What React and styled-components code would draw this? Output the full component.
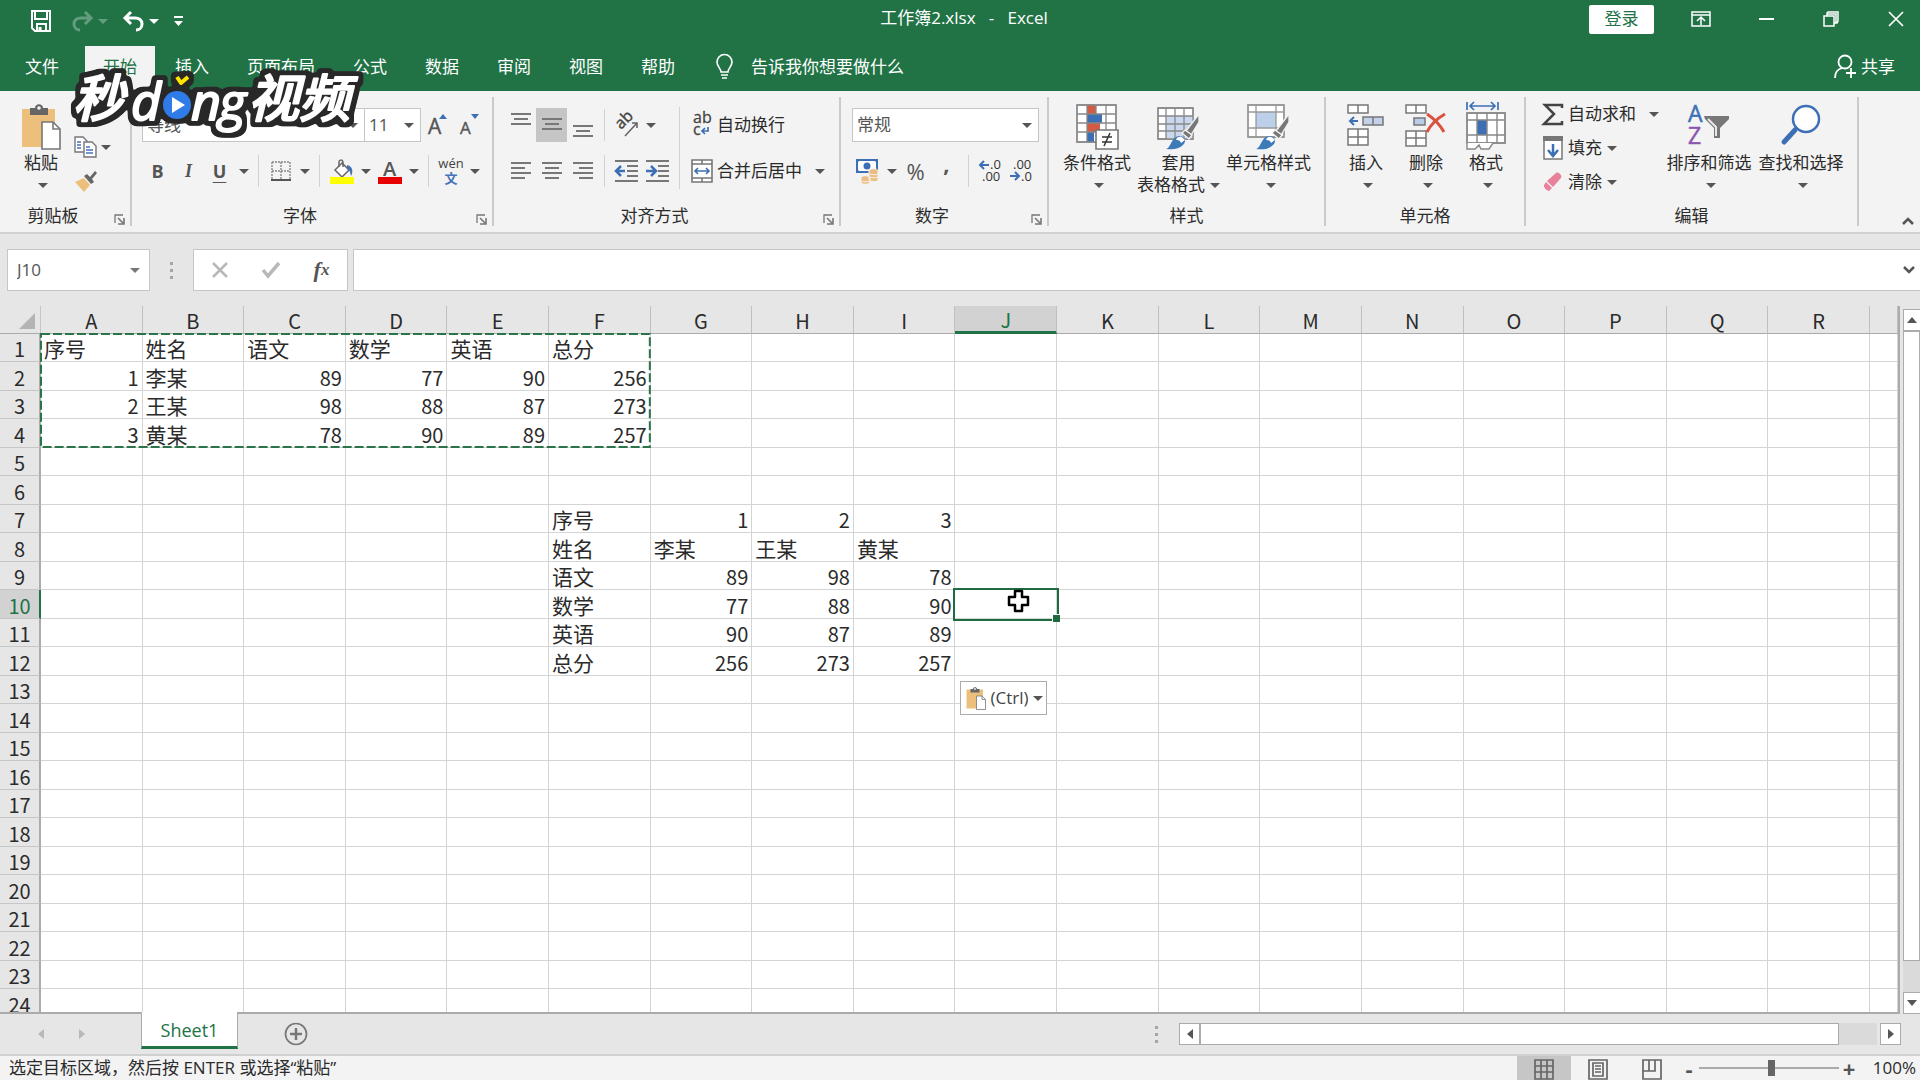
import styled, { createGlobalStyle, css } from "styled-components";

const GlobalStyle = createGlobalStyle`
    * {
        box-sizing: border-box;
    }
    body {
        margin: 0;
        overflow: hidden;
    }
    body, button, input, select {
        font-family: "Open Sans", "Noto Sans CJK SC", sans-serif;
        font-size: 17px;
        line-height: 22px;
        color: #2b2b2b;
    }
    button, input, select {
        margin: 0;
        padding: 0;
        border: 0;
        background: none;
    }
    svg {
        display: block;
        flex: none;
        overflow: visible;
    }
`;

const Window = styled.div`
    display: flex;
    flex-direction: column;
    height: 100vh;
    background-color: #e6e6e6;
`;

/* ---------- title bar ---------- */

const TitleBar = styled.header`
    display: grid;
    grid-template-columns: 1fr auto 1fr;
    height: 46px;
    padding-bottom: 8px;
    background-color: #217346;
    color: #fff;
`;

const QuickAccess = styled.div`
    display: flex;
    align-items: center;
    gap: 15px;
    padding: 4px 0 0 31px;
`;

const QuickButton = styled.button`
    display: flex;
    align-items: center;
    gap: 5px;
    min-width: 26px;
    height: 24px;
    color: #fff;
    opacity: ${(props) => (props.$dim ? 0.3 : 1)};
`;

const Title = styled.h1`
    margin: 0;
    padding-left: 8px;
    font-size: 17px;
    font-weight: 400;
    line-height: 36px;
    white-space: pre;
`;

const WindowButtons = styled.div`
    display: flex;
    align-items: center;
    justify-content: flex-end;
    gap: 17px;
`;

const LoginButton = styled.button`
    width: 65px;
    height: 29px;
    margin-right: 6px;
    border-radius: 2px;
    background-color: #fff;
    color: #217346;
`;

const WindowButton = styled.button`
    display: flex;
    align-items: center;
    justify-content: center;
    width: 48px;
    height: 36px;
    color: #fff;
`;

/* ---------- tabs ---------- */

const TabBar = styled.nav`
    display: flex;
    height: 45px;
    background-color: #217346;
`;

const Tab = styled.button`
    margin: 0 1px;
    padding: 0 ${(props) => (props.$file ? 24 : 18)}px 4px;
    color: #fff;
    ${(props) =>
        props.$active &&
        css`
            background-color: #f3f3f3;
            color: #217346;
        `}
`;

const TellMe = styled.button`
    display: flex;
    align-items: center;
    gap: 18px;
    margin-left: 22px;
    padding-bottom: 4px;
    color: #fff;
`;

const Share = styled(TellMe)`
    gap: 5px;
    margin-left: auto;
    margin-right: 25px;
`;

/* ---------- ribbon ---------- */

const Ribbon = styled.div`
    display: flex;
    padding: 6px 0;
    border-bottom: 2px solid #d0d0d0;
    background-color: #f3f3f3;
`;

const Group = styled.section`
    display: flex;
    flex-direction: column;
    flex: none;
    width: ${(props) => props.$width}px;
    height: 129px;
    border-right: 2px solid #cacaca;
`;

const GroupBody = styled.div`
    display: flex;
    flex: 1;
    padding: 0 ${(props) => props.$side ?? 10}px 0 ${(props) => props.$side ?? 11}px;
`;

const GroupFooter = styled.div`
    display: flex;
    align-items: center;
    height: 22px;
    padding-top: 2px;
`;

const GroupName = styled.span`
    flex: 1;
    text-align: center;
`;

const Launcher = styled.button`
    width: 24px;
    padding: 6px 5px 0 8px;
`;

const Rows = styled.div`
    display: flex;
    flex-direction: column;
    gap: 13px;
    flex: ${(props) => (props.$grow ? 1 : "none")};
    padding-top: 11px;
`;

const Row = styled.div`
    display: flex;
    align-items: center;
    height: ${(props) => (props.$small ? 32 : 34)}px;
`;

const Tool = styled.button`
    display: flex;
    align-items: center;
    justify-content: center;
    width: 31px;
    height: 34px;
    padding-bottom: ${(props) => (props.$raised ? 16 : 0)}px;
    color: #555;
    font-size: ${(props) => (props.$large ? 22 : 18)}px;
    background-color: ${(props) => (props.$on ? "#c5c5c5" : "transparent")};
    font-weight: ${(props) => (props.$bold ? 700 : 400)};
    font-style: ${(props) => (props.$italic ? "italic" : "normal")};
    font-family: ${(props) => (props.$italic ? '"Liberation Serif", serif' : "inherit")};
    text-decoration: ${(props) => (props.$underline ? "underline" : "none")};
    text-underline-offset: 4px;
`;

const Caret = styled.span`
    flex: none;
    border: 5px solid transparent;
    border-bottom-width: 0;
    border-top-color: ${(props) => props.$color || "#555"};
    pointer-events: none;
`;

const CaretButton = styled.button`
    display: flex;
    align-items: center;
    justify-content: center;
    width: 17px;
    height: 34px;
`;

const Divider = styled.span`
    width: 1px;
    height: ${(props) => (props.$tall ? 82 : 32)}px;
    margin: ${(props) => (props.$tall ? 10 : 0)}px 6px 0;
    background-color: #d2d2d2;
`;

const Combo = styled.label`
    display: flex;
    align-items: center;
    width: ${(props) => props.$width}px;
    height: 34px;
    padding: 0 6px 0 4px;
    border: 1px solid #c6c6c6;
    background-color: #fff;

    select {
        flex: 1;
        min-width: 0;
        height: 30px;
        color: #555;
        appearance: none;
        outline: none;
    }
    & + & {
        border-left: 0;
    }
`;

const LabelTool = styled.button`
    display: flex;
    align-items: center;
    height: 34px;
    white-space: nowrap;
`;

const LabelIcon = styled.span`
    display: flex;
    justify-content: center;
    width: 31px;
`;

const LabelCaret = styled(Caret)`
    margin-left: ${(props) => (props.$far ? 13 : 5)}px;
`;

const BigTool = styled.button`
    display: flex;
    flex-direction: column;
    align-items: center;
    flex: none;
    height: 104px;
    min-width: ${(props) => props.$width || 0}px;
    padding: 4px 3px 0;
    white-space: nowrap;
`;

const BigIcon = styled.span`
    display: flex;
    align-items: center;
    justify-content: center;
    height: 51px;
`;

const BigLine = styled.span`
    display: flex;
    align-items: center;
    justify-content: center;
    gap: 5px;
    height: 22px;
    padding-left: ${(props) => (props.$caretOnly ? 4 : 0)}px;
`;

const ClipTools = styled.div`
    display: flex;
    flex-direction: column;
    gap: 2px;
    padding: 34px 0 0 3px;
`;

const EditList = styled.div`
    display: flex;
    flex-direction: column;
    width: 128px;
`;

const Collapse = styled.button`
    align-self: flex-end;
    margin: 0 6px 0 auto;
`;

/* ---------- formula bar ---------- */

const FormulaBar = styled.div`
    display: flex;
    padding: 15px 0 15px 7px;
`;

const NameBox = styled.label`
    display: flex;
    align-items: center;
    width: 143px;
    height: 42px;
    padding: 0 9px;
    border: 1px solid #c6c6c6;
    background-color: #fff;

    input {
        flex: 1;
        min-width: 0;
        color: #555;
    }
`;

const Grip = styled.span`
    align-self: center;
    width: 3px;
    height: 17px;
    margin: 0 ${(props) => (props.$tight ? 21 : 20)}px;
    background: repeating-linear-gradient(#a5a5a5 0 3px, transparent 3px 7px);
`;

const FxBox = styled.div`
    display: flex;
    width: 155px;
    height: 42px;
    margin-right: 5px;
    border: 1px solid #c6c6c6;
    background-color: #fff;
`;

const FxButton = styled.button`
    display: flex;
    align-items: center;
    justify-content: center;
    flex: 1;
    font: italic 700 22px/30px "Liberation Serif", serif;
    color: #555;

    small {
        font-size: 17px;
    }
`;

const FormulaField = styled.div`
    display: flex;
    align-items: center;
    flex: 1;
    height: 42px;
    padding-right: 5px;
    border: 1px solid #c6c6c6;
    border-right: 0;
    background-color: #fff;

    input {
        flex: 1;
        padding: 0 8px;
        outline: none;
    }
`;

/* ---------- sheet ---------- */

const SheetArea = styled.main`
    display: flex;
    flex: 1;
    min-height: 0;
`;

const GridPane = styled.div`
    flex: 1;
    min-width: 0;
    overflow: hidden;
    border-bottom: 2px solid #ababab;
`;

const Sheet = styled.table`
    width: 100%;
    table-layout: fixed;
    border-collapse: separate;
    border-spacing: 0;
    border-right: 2px solid #ababab;
    font-family: "Noto Sans CJK SC", sans-serif;
    font-size: 21px;
    line-height: 24px;
    color: #2b2b2b;

    tbody tr {
        height: 29px;
    }
    tbody tr:nth-child(odd) {
        height: 28px;
    }
`;

const RowHeadCol = styled.col`
    width: 41px;
`;

const EdgeCol = styled.col`
    width: 28px;
`;

const Corner = styled.td`
    height: 28px;
    padding: 3px 5px 0 0;
    border-right: 1px solid #c6c6c6;
    border-bottom: 1px solid #ababab;

    svg {
        margin-left: auto;
    }
`;

const ColHead = styled.th`
    height: 28px;
    padding: 3px 0 0;
    border-right: 1px solid #c0c0c0;
    border-bottom: 1px solid #ababab;
    font-size: 20px;
    font-weight: 400;
    line-height: 22px;
    ${(props) =>
        props.$selected &&
        css`
            border-bottom: 3px solid #217346;
            background-color: #d2d2d2;
            color: #217346;
        `}
`;

const RowHead = styled.th`
    padding: 3px 0 0;
    border-right: 2px solid #ababab;
    border-bottom: 1px solid #c6c6c6;
    font-size: 20px;
    font-weight: 400;
    ${(props) =>
        props.$selected &&
        css`
            border-right-color: #217346;
            background-color: #d2d2d2;
            color: #217346;
        `}
`;

const Cell = styled.td`
    position: relative;
    padding: 1px 3px 0;
    border-right: 1px solid #d4d4d4;
    border-bottom: 1px solid #d4d4d4;
    background-color: #fff;
    white-space: nowrap;
    ${(props) =>
        props.$number &&
        css`
            padding-top: 3px;
            font-size: 20px;
            text-align: right;
        `}
`;

const CopyOutline = styled.svg`
    position: absolute;
    z-index: 1;
    top: -1px;
    left: -1px;
    width: calc(600% + 7px);
    height: 115px;
    pointer-events: none;
`;

const Selection = styled.span`
    position: absolute;
    z-index: 2;
    inset: -2px -3px -3px -2px;
    border: 2px solid #1e6b41;

    &::after {
        content: "";
        position: absolute;
        right: -3px;
        bottom: -3px;
        width: 7px;
        height: 7px;
        border: 1px solid #fff;
        border-width: 1px 0 0 1px;
        background-color: #1e6b41;
    }
`;

const Pointer = styled.svg`
    position: absolute;
    z-index: 3;
    top: -1px;
    left: 52px;
`;

const PasteOptions = styled.button`
    position: absolute;
    z-index: 2;
    top: 5px;
    left: 5px;
    display: flex;
    align-items: center;
    gap: 4px;
    width: 87px;
    height: 34px;
    padding: 0 5px;
    border: 1px solid #ababab;
    background-color: #fff;
    color: #444;
`;

const VScroll = styled.div`
    display: flex;
    flex-direction: column;
    width: 20px;
    padding: 3px 0 0 3px;
    overflow: hidden;
`;

const ScrollButton = styled.button`
    display: flex;
    align-items: center;
    justify-content: center;
    flex: none;
    width: ${(props) => (props.$horizontal ? 21 : 18)}px;
    height: 22px;
    border: 1px solid #ababab;
    background-color: #fff;
`;

const VTrack = styled.div`
    flex: 1;
    padding-bottom: 31px;
    background-color: #dadada;
`;

const VThumb = styled.div`
    height: 100%;
    border: 1px solid #ababab;
    background-color: #fff;
`;

/* ---------- sheet tabs ---------- */

const SheetBar = styled.div`
    display: flex;
    height: 40px;
`;

const SheetNav = styled.div`
    display: flex;
    align-items: center;
    justify-content: flex-end;
    gap: 31px;
    width: 141px;
    padding-right: 54px;
`;

const SheetTab = styled.button`
    width: 97px;
    height: 37px;
    margin-top: -2px;
    padding-top: 2px;
    border: 1px solid #ababab;
    border-top: 0;
    border-bottom: 3px solid #217346;
    background-color: #fff;
    font-size: 18px;
    color: #217346;
`;

const AddSheet = styled.button`
    margin-left: 46px;
`;

const HScroll = styled.div`
    display: flex;
    align-items: center;
    width: 767px;
    margin: 0 19px 0 auto;
`;

const HTrack = styled.div`
    flex: 1;
    margin-right: 3px;
    padding-right: 38px;
    background-color: #dadada;
`;

const HThumb = styled.div`
    height: 22px;
    border: 1px solid #ababab;
    background-color: #fff;
`;

/* ---------- status bar ---------- */

const StatusBar = styled.footer`
    display: flex;
    align-items: center;
    height: 26px;
    padding: 0 4px 0 9px;
    border-top: 2px solid #d0d0d0;
    background-color: #f3f3f3;
`;

const StatusText = styled.span`
    flex: 1;
`;

const ViewButton = styled.button`
    display: flex;
    align-items: flex-end;
    justify-content: center;
    width: 54px;
    height: 24px;
    background-color: ${(props) => (props.$on ? "#c6c6c6" : "transparent")};
`;

const ZoomButton = styled.button`
    width: 20px;
    font-size: 22px;
    font-weight: 700;
    line-height: 20px;
    color: #555;
`;

const ZoomSlider = styled.input`
    width: 140px;
    height: 18px;
    appearance: none;
    background: linear-gradient(#ababab, #ababab) center / 100% 2px no-repeat;

    &::-webkit-slider-thumb {
        appearance: none;
        width: 7px;
        height: 16px;
        background-color: #666;
    }
`;

const ZoomValue = styled.span`
    width: 57px;
    text-align: right;
`;

/* ---------- watermark ---------- */

const Watermark = styled.svg`
    position: absolute;
    z-index: 5;
    top: 64px;
    left: 64px;
    pointer-events: none;
`;

/* ---------- icons ---------- */

const uiFont = '"Open Sans", "Noto Sans CJK SC", sans-serif';

const SaveIcon = () => (
    <svg width="20" height="22" fill="none" stroke="#fff" strokeWidth="2">
        <path d="M1 1h18v20H4l-3-3z M4 1v8h12V1 M6 21v-7h9v7" />
        <path d="M9 17v4" strokeWidth="3" />
    </svg>
);

const UndoIcon = ({ flip }) => (
    <svg width="21" height="20" fill="none" stroke="#fff" strokeWidth="3">
        <path
            transform={flip ? "matrix(-1 0 0 1 21 0)" : undefined}
            d="M8 1L2 7l6 6 M3 7h9c4 0 7 2 7 6s-3 6-6 6"
        />
    </svg>
);

const CustomizeIcon = () => (
    <svg width="9" height="11" fill="#fff">
        <path d="M0 0h9v2H0z M0 5h9L4.500 10z" />
    </svg>
);

const RibbonDisplayIcon = () => (
    <svg width="20" height="16" fill="none" stroke="#fff" strokeWidth="1.500">
        <path d="M1 1h18v14H1z M1 4h18 M10 14V7 M6 10l4-4 4 4" />
    </svg>
);

const MinimizeIcon = () => (
    <svg width="15" height="2" fill="#fff">
        <path d="M0 0h15v2H0z" />
    </svg>
);

const RestoreIcon = () => (
    <svg width="16" height="16" fill="none" stroke="#fff" strokeWidth="1.500">
        <path d="M1 5h10v10H1z M4 5V2l1-1h10v9l-1 2h-3 M4 3h9v9" />
    </svg>
);

const CloseIcon = () => (
    <svg width="16" height="16" fill="none" stroke="#fff" strokeWidth="1.700">
        <path d="M1 1l14 14M15 1L1 15" />
    </svg>
);

const BulbIcon = () => (
    <svg width="17" height="25" fill="none" stroke="#fff" strokeWidth="1.600">
        <path d="M5 18c0-4-4-5-4-10a7.500 7.500 0 0 1 15 0c0 5-4 6-4 10z M5 21h7 M6 24h5" />
    </svg>
);

const ShareIcon = () => (
    <svg width="22" height="25" fill="none" stroke="#fff" strokeWidth="1.800">
        <circle cx="11" cy="8" r="6.500" />
        <path d="M1 24c0-6 3-9 7-10M12 19h10M17 14v10" />
    </svg>
);

const LauncherIcon = () => (
    <svg width="11" height="11" fill="none" stroke="#777" strokeWidth="1.300">
        <path d="M1 9V1h8" />
        <path d="M4 4l5 5M10 4v6H4" strokeWidth="1.600" />
    </svg>
);

const PasteIcon = ({ size = 46 }) => (
    <svg width={(size * 40) / 46} height={size} viewBox="0 0 40 46">
        <path d="M1 5h33v38H1z" fill="#ecc07c" />
        <path d="M9 4h5c0-5 8-5 8 0h5v7H9z" fill="#666" />
        <circle cx="18" cy="4" r="1.800" fill="#f3f3f3" />
        <path d="M21 18h11l7 7v20H21z" fill="#fff" stroke="#777" strokeWidth="1.600" />
        <path d="M32 18v7h7" fill="none" stroke="#777" strokeWidth="1.600" />
    </svg>
);

const CopyIcon = () => (
    <svg width="23" height="22" fill="#fff" stroke="#777" strokeWidth="1.400">
        <path d="M1 1h8l4 4v11H1z" />
        <path d="M10 6h8l4 4v11H10z" />
        <path d="M3 6h4M3 9h4M3 12h4M12 11h4M12 14h7M12 17h7" stroke="#4472b8" />
    </svg>
);

const BrushIcon = () => (
    <svg width="24" height="22">
        <path d="M1 12l9-4 6 7-6 7z" fill="#ecc07c" />
        <path d="M10 6l3-2 3 3 5-6 2 2-5 6 2 3-3 2z" fill="#666" />
    </svg>
);

const FontSizeIcon = ({ shrink }) => (
    <svg width="24" height="26" fontFamily={uiFont}>
        <text x={shrink ? 4 : 3} y="22" fontSize={shrink ? 17 : 21} fill="#555" stroke="#555" strokeWidth="0.400">
            A
        </text>
        <path d={shrink ? "M15 2h8l-4 5z" : "M14 7h8l-4-5z"} fill="#3d6fb5" />
    </svg>
);

const BorderIcon = () => (
    <svg width="20" height="20" fill="none" stroke="#888" strokeWidth="1.400">
        <path d="M1 1h18M1 10h18M1 1v17M10 1v17M19 1v17" strokeDasharray="2 1" />
        <path d="M0 19h20" stroke="#555" strokeWidth="2" />
    </svg>
);

const FillIcon = () => (
    <svg width="24" height="25">
        <path d="M5 11l7-7 7 7-7 7z" fill="#fff" stroke="#666" strokeWidth="1.500" />
        <path d="M9 8V3c0-2 3-3 4 0v5" fill="none" stroke="#666" strokeWidth="1.500" />
        <path d="M17 6c5 1 7 6 4 11-1-4-1-6-4-7z" fill="#4472b8" />
        <path d="M0 18h24v7H0z" fill="#ffff00" />
    </svg>
);

const FontColorIcon = () => (
    <svg width="24" height="25" fontFamily={uiFont}>
        <text x="5" y="17" fontSize="20" fontWeight="600" fill="#555">
            A
        </text>
        <path d="M0 18h24v7H0z" fill="#e60000" />
    </svg>
);

const PhoneticIcon = () => (
    <svg width="24" height="26" fontFamily={uiFont} textAnchor="middle">
        <text x="12" y="10" fontSize="13" fill="#444">
            wén
        </text>
        <text x="12" y="25" fontSize="13" fontWeight="700" fill="#4472b8">
            文
        </text>
    </svg>
);

const lineSets = {
    top: "M0 1h20M3 6h14M0 11h20",
    middle: "M0 6h20M3 11h14M0 16h20",
    bottom: "M0 13h20M3 18h14M0 23h20",
    left: "M0 4h20M0 9h14M0 14h20M0 19h14",
    center: "M0 4h20M3 9h14M0 14h20M3 19h14",
    right: "M0 4h20M6 9h14M0 14h20M6 19h14",
};

const LinesIcon = ({ kind }) => (
    <svg width="20" height="24" stroke="#777" strokeWidth="2">
        <path d={lineSets[kind]} />
    </svg>
);

const IndentIcon = ({ increase }) => (
    <svg width="23" height="22" fill="none" stroke="#777" strokeWidth="1.800">
        <path d="M0 1h23M12 6h11M12 11h11M12 16h11M0 21h23" />
        <path d={increase ? "M0 11h9M5 6l5 5-5 5" : "M10 11H1M6 6l-5 5 5 5"} stroke="#3d6fb5" strokeWidth="2.500" />
    </svg>
);

const OrientationIcon = () => (
    <svg width="24" height="24" fontFamily={uiFont}>
        <text transform="translate(6 17) rotate(-45)" fontSize="16" fill="#444" stroke="#444" strokeWidth="0.400">
            ab
        </text>
        <path d="M10 23L22 10M17 10h5v5" fill="none" stroke="#666" strokeWidth="1.600" />
    </svg>
);

const WrapIcon = () => (
    <svg width="18" height="26" fontFamily={uiFont} fontSize="16" fill="#444" strokeWidth="0.300" stroke="#444">
        <text x="0" y="11">
            ab
        </text>
        <text x="0" y="23">
            c
        </text>
        <path d="M15 15v4h-5M12 16l-3 3 3 3" fill="none" stroke="#3d6fb5" strokeWidth="1.700" />
    </svg>
);

const MergeIcon = () => (
    <svg width="22" height="24" fill="none" stroke="#777" strokeWidth="1.600">
        <path d="M1 1h20v22H1z" fill="#fff" />
        <path d="M1 5h20M1 19h20M11 1v4M11 19v4" />
        <path d="M4 12h14M7 9l-3 3 3 3M15 9l3 3-3 3" stroke="#3d6fb5" />
    </svg>
);

const CurrencyIcon = () => (
    <svg width="23" height="25">
        <path d="M1 1h20v12H1z" fill="#fff" stroke="#3d6fb5" strokeWidth="2" />
        <path d="M0 0h5L0 5zM22 0h-5l5 5zM0 14v-5l5 5z" fill="#3d6fb5" />
        <circle cx="11" cy="7" r="3.500" fill="#3d6fb5" />
        <path d="M13 12c0-3 9-3 9 0v9c0 2-7 2-9 0z M5 19c0-3 9-3 9 0v4c0 3-9 3-9 0z" fill="#ecbd7e" stroke="#f3f3f3" />
        <path d="M14 15c2 1 6 1 8 0M14 18c2 1 6 1 8 0M6 22c2 1 6 1 8 0" fill="none" stroke="#f3f3f3" />
    </svg>
);

const DecimalIcon = ({ decrease }) => (
    <svg width="23" height="24" fontFamily={uiFont} fontSize="13" fill="#333">
        <text x={decrease ? 3 : 11} y="10">
            {decrease ? ".00" : ".0"}
        </text>
        <text x={decrease ? 11 : 3} y="22">
            {decrease ? ".0" : ".00"}
        </text>
        <path
            d={decrease ? "M0 17h9M5 13l4 4-4 4" : "M10 6H1M5 2L1 6l4 4"}
            fill="none"
            stroke="#3d6fb5"
            strokeWidth="2"
        />
    </svg>
);

const ConditionalIcon = () => (
    <svg width="43" height="46" fill="none" stroke="#888" strokeWidth="1.300">
        <path d="M1 1h39v37H1z" fill="#fff" />
        <path d="M11 1h9v9h-9z M11 19h13v9H11z" fill="#d35a43" stroke="none" />
        <path d="M11 10h15v9H11z M11 28h7v10h-7z" fill="#3d6fb5" stroke="none" />
        <path d="M1 1h39v37H1zM1 10h39M1 19h39M1 28h39M11 1v37M20 1v9M30 1v37" />
        <path d="M20 26h22v19H20z" fill="#fff" stroke="#777" strokeWidth="1.600" />
        <path d="M26 33h10M26 38h10M34 29l-6 13" stroke="#333" strokeWidth="1.500" />
    </svg>
);

const BigBrush = () => (
    <g stroke="none">
        <path d="M42 10L29 27l5 4 8-13z" fill="#777" stroke="#f3f3f3" />
        <path d="M28 26l7 5-3 4-7-6z" fill="#777" stroke="#f3f3f3" />
        <path d="M9 45c5-1 5-12 13-13 6 0 8 5 4 9s-10 5-17 4z" fill="#3d7ab8" />
        <path d="M19 36c1-4 5-4 7-2l2 2-4 3c-1-3-3-3-5-3z" fill="#fff" />
    </g>
);

const FormatTableIcon = () => (
    <svg width="43" height="46" fill="none" stroke="#888" strokeWidth="1.300">
        <path d="M1 4h35v31H1z" fill="#fff" />
        <path d="M9 12h27v23H9z" fill="#c9d8ee" stroke="none" />
        <path d="M1 4h35v31H1zM1 12h35M1 20h35M1 27h35M9 4v31M18 4v31M27 4v31" />
        <BigBrush />
    </svg>
);

const CellStyleIcon = () => (
    <svg width="43" height="46" fill="none" stroke="#888" strokeWidth="1.300">
        <path d="M1 1h36v32H1z" fill="#fff" />
        <path d="M9 8h20v16H9z" fill="#bcd0ea" stroke="none" />
        <path d="M1 1h36v32H1zM1 8h36M1 24h36M9 1v32M29 1v32" stroke="#999" />
        <BigBrush />
    </svg>
);

const InsertIcon = () => (
    <svg width="38" height="46" fill="#fff" stroke="#777" strokeWidth="1.500">
        <path d="M1 1h20v8H1zM11 1v8M1 25h20v16H1zM1 33h20M11 25v16" />
        <path d="M16 13h20v8H16zM26 13v8" fill="#c3d2e8" />
        <path d="M11 17H3M7 13l-4 4 4 4" fill="none" stroke="#3d6fb5" strokeWidth="2" />
    </svg>
);

const DeleteIcon = () => (
    <svg width="42" height="46" fill="#fff" stroke="#777" strokeWidth="1.500">
        <path d="M1 1h20v8H1zM11 1v8M1 27h20v15H1zM1 34h20M11 27v15" />
        <path d="M9 14h11v7H9z" fill="#b9cce8" />
        <path d="M22 10c6 4 12 9 17 18M40 10c-7 4-14 10-18 18" fill="none" stroke="#d9533f" strokeWidth="3" />
    </svg>
);

const FormatIcon = () => (
    <svg width="40" height="50" fill="none" stroke="#888" strokeWidth="1.400">
        <path d="M1 0v8M32 0v8M4 4h25M8 0L4 4l4 4M25 0l4 4-4 4" stroke="#3d6fb5" strokeWidth="1.700" />
        <path d="M1 11h38v30H1z" fill="#fff" />
        <path d="M11 18h10v15H11z" fill="#3d6fb5" stroke="none" />
        <path d="M1 11h38v30H1zM1 18h38M1 33h38M11 11v30M21 11v30M31 11v30" />
        <path d="M1 41v6h8l4-4 2 4h8l4-6" fill="#fff" />
    </svg>
);

const SumIcon = () => (
    <svg width="21" height="23" fill="none" stroke="#444" strokeWidth="2.500">
        <path d="M20 5V2H3l9 9-10 10h18v-3" />
    </svg>
);

const FillDownIcon = () => (
    <svg width="20" height="24" fill="none">
        <path d="M1 1h18v22H1z" fill="#fff" stroke="#777" strokeWidth="1.500" />
        <path d="M0 0h20v5H0z" fill="#777" />
        <path d="M10 8v12M5 14l5 6 5-6" stroke="#3d6fb5" strokeWidth="2.500" />
    </svg>
);

const EraserIcon = () => (
    <svg width="20" height="20">
        <path d="M13 1c2-2 7 3 5 5l-8 9-6-6z" fill="#e8819a" />
        <path d="M3 10l6 6-3 3c-2 0-6-4-5-6z" fill="#e8819a" />
    </svg>
);

const SortIcon = () => (
    <svg width="42" height="46" fontFamily={uiFont} fontSize="23">
        <text x="0" y="18" fill="#3d6fb5" stroke="#3d6fb5" strokeWidth="0.500">
            A
        </text>
        <text x="0" y="40" fill="#8e55b0" stroke="#8e55b0" strokeWidth="0.500">
            Z
        </text>
        <path d="M16 12h25v3l-9 9v10h-6V24l-9-9z" fill="#777" />
        <path d="M20 15l8 8v9" fill="none" stroke="#e8e8e8" strokeWidth="2" />
    </svg>
);

const FindIcon = () => (
    <svg width="40" height="46" fill="none" stroke="#3d6fb5">
        <path d="M14 26L3 38" strokeWidth="5" strokeLinecap="round" />
        <circle cx="25" cy="15" r="13" fill="#fff" strokeWidth="2.500" />
    </svg>
);

const Chevron = ({ down }) => (
    <svg width="12" height="10" fill="none" stroke="#555" strokeWidth="2.500">
        <path d={down ? "M1 2l5 5 5-5" : "M1 8l5-5 5 5"} />
    </svg>
);

const arrowShapes = {
    up: "M0 8h10L5 2z",
    down: "M0 2h10L5 8z",
    left: "M8 0v10L2 5z",
    right: "M2 0v10l6-5z",
};

const Arrow = ({ dir, color = "#555" }) => (
    <svg width="10" height="10" fill={color}>
        <path d={arrowShapes[dir]} />
    </svg>
);

const viewShapes = {
    normal: "M1 1h18v19H1zM1 7h18M1 13h18M7 1v19M13 1v19",
    layout: "M1 1h18v19H1zM5 4h10v13H5zM7 7h6M7 10h6M7 13h6",
    breaks: "M1 1h18v19H1zM1 12h12V1M7 1v11",
};

const ViewIcon = ({ kind }) => (
    <svg width="20" height="21" fill="none" stroke="#666" strokeWidth="1.700">
        <path d={viewShapes[kind]} />
    </svg>
);

/* ---------- data ---------- */

const tabs = ["开始", "插入", "页面布局", "公式", "数据", "审阅", "视图", "帮助"];
const columns = "ABCDEFGHIJKLMNOPQR".split("");
const rowNumbers = Array.from({ length: 24 }, (_, i) => i + 1);

const source = [
    ["序号", "姓名", "语文", "数学", "英语", "总分"],
    [1, "李某", 89, 77, 90, 256],
    [2, "王某", 98, 88, 87, 273],
    [3, "黄某", 78, 90, 89, 257],
];

const cells = {};
source.forEach((line, r) => {
    line.forEach((value, c) => {
        cells[columns[c] + (r + 1)] = value;
        // transposed copy starting at F7
        cells[columns[5 + r] + (7 + c)] = value;
    });
});

/* ---------- parts ---------- */

function RibbonGroup({ name, width, side, launcher, children }) {
    return (
        <Group $width={width}>
            <GroupBody $side={side}>{children}</GroupBody>
            <GroupFooter>
                <GroupName>{name}</GroupName>
                {launcher && (
                    <Launcher aria-label={name}>
                        <LauncherIcon />
                    </Launcher>
                )}
            </GroupFooter>
        </Group>
    );
}

function DropCaret({ label }) {
    return (
        <CaretButton aria-label={label}>
            <Caret />
        </CaretButton>
    );
}

function BigButton({ icon, label, second, width }) {
    return (
        <BigTool $width={width}>
            <BigIcon>{icon}</BigIcon>
            <BigLine>{label}</BigLine>
            <BigLine $caretOnly={!second}>
                {second}
                <Caret />
            </BigLine>
        </BigTool>
    );
}

function SmallButton({ icon, label, caret, far }) {
    return (
        <LabelTool>
            <LabelIcon>{icon}</LabelIcon>
            {label}
            {caret && <LabelCaret $far={far} />}
        </LabelTool>
    );
}

function RibbonBar() {
    return (
        <Ribbon>
            <RibbonGroup name="剪贴板" width={132} launcher>
                <BigButton icon={<PasteIcon />} label="粘贴" width={60} />
                <ClipTools>
                    <Row $small>
                        <CopyIcon />
                        <DropCaret label="复制" />
                    </Row>
                    <Row $small>
                        <BrushIcon />
                    </Row>
                </ClipTools>
            </RibbonGroup>

            <RibbonGroup name="字体" width={362} side={10} launcher>
                <Rows>
                    <Row>
                        <Combo $width={223}>
                            <select aria-label="字体">
                                <option>等线</option>
                            </select>
                            <Caret />
                        </Combo>
                        <Combo $width={56}>
                            <select aria-label="字号">
                                <option>11</option>
                            </select>
                            <Caret />
                        </Combo>
                        <Tool aria-label="增大字号">
                            <FontSizeIcon />
                        </Tool>
                        <Tool aria-label="减小字号">
                            <FontSizeIcon shrink />
                        </Tool>
                    </Row>
                    <Row $small>
                        <Tool $bold>B</Tool>
                        <Tool $bold $italic>
                            I
                        </Tool>
                        <Tool $bold $underline>
                            U
                        </Tool>
                        <DropCaret label="下划线" />
                        <Divider />
                        <Tool aria-label="边框">
                            <BorderIcon />
                        </Tool>
                        <DropCaret label="边框选项" />
                        <Divider />
                        <Tool aria-label="填充颜色">
                            <FillIcon />
                        </Tool>
                        <DropCaret label="填充颜色选项" />
                        <Tool aria-label="字体颜色">
                            <FontColorIcon />
                        </Tool>
                        <DropCaret label="字体颜色选项" />
                        <Divider />
                        <Tool aria-label="拼音">
                            <PhoneticIcon />
                        </Tool>
                        <DropCaret label="拼音选项" />
                    </Row>
                </Rows>
            </RibbonGroup>

            <RibbonGroup name="对齐方式" width={347} launcher>
                <Rows>
                    <Row>
                        <Tool aria-label="顶端对齐">
                            <LinesIcon kind="top" />
                        </Tool>
                        <Tool aria-label="垂直居中" $on>
                            <LinesIcon kind="middle" />
                        </Tool>
                        <Tool aria-label="底端对齐">
                            <LinesIcon kind="bottom" />
                        </Tool>
                        <Divider />
                        <Tool aria-label="方向">
                            <OrientationIcon />
                        </Tool>
                        <DropCaret label="方向选项" />
                    </Row>
                    <Row $small>
                        <Tool aria-label="左对齐">
                            <LinesIcon kind="left" />
                        </Tool>
                        <Tool aria-label="居中">
                            <LinesIcon kind="center" />
                        </Tool>
                        <Tool aria-label="右对齐">
                            <LinesIcon kind="right" />
                        </Tool>
                        <Divider />
                        <Tool aria-label="减少缩进量">
                            <IndentIcon />
                        </Tool>
                        <Tool aria-label="增加缩进量">
                            <IndentIcon increase />
                        </Tool>
                    </Row>
                </Rows>
                <Divider $tall />
                <Rows>
                    <Row>
                        <SmallButton icon={<WrapIcon />} label="自动换行" />
                    </Row>
                    <Row $small>
                        <SmallButton icon={<MergeIcon />} label="合并后居中" caret far />
                    </Row>
                </Rows>
            </RibbonGroup>

            <RibbonGroup name="数字" width={208} launcher>
                <Rows $grow>
                    <Row>
                        <Combo $width={187}>
                            <select aria-label="数字格式">
                                <option>常规</option>
                            </select>
                            <Caret />
                        </Combo>
                    </Row>
                    <Row $small>
                        <Tool aria-label="会计数字格式">
                            <CurrencyIcon />
                        </Tool>
                        <DropCaret label="会计数字格式选项" />
                        <Tool $large>%</Tool>
                        <Tool $large $bold $raised>
                            ,
                        </Tool>
                        <Divider />
                        <Tool aria-label="增加小数位数">
                            <DecimalIcon />
                        </Tool>
                        <Tool aria-label="减少小数位数">
                            <DecimalIcon decrease />
                        </Tool>
                    </Row>
                </Rows>
            </RibbonGroup>

            <RibbonGroup name="样式" width={277}>
                <BigButton icon={<ConditionalIcon />} label="条件格式" />
                <BigButton icon={<FormatTableIcon />} label="套用" second="表格格式" />
                <BigButton icon={<CellStyleIcon />} label="单元格样式" />
            </RibbonGroup>

            <RibbonGroup name="单元格" width={200} side={10}>
                <BigButton icon={<InsertIcon />} label="插入" width={60} />
                <BigButton icon={<DeleteIcon />} label="删除" width={60} />
                <BigButton icon={<FormatIcon />} label="格式" width={60} />
            </RibbonGroup>

            <RibbonGroup name="编辑" width={333}>
                <EditList>
                    <SmallButton icon={<SumIcon />} label="自动求和" caret far />
                    <SmallButton icon={<FillDownIcon />} label="填充" caret />
                    <SmallButton icon={<EraserIcon />} label="清除" caret />
                </EditList>
                <BigButton icon={<SortIcon />} label="排序和筛选" width={92} />
                <BigButton icon={<FindIcon />} label="查找和选择" width={92} />
            </RibbonGroup>

            <Collapse aria-label="折叠功能区">
                <Chevron />
            </Collapse>
        </Ribbon>
    );
}

function SheetCell({ name }) {
    const value = cells[name];
    return (
        <Cell $number={typeof value === "number"}>
            {value}
            {name === "A1" && (
                <CopyOutline>
                    <rect
                        x="1"
                        y="1"
                        width="99.700%"
                        height="113"
                        fill="none"
                        stroke="#2b7349"
                        strokeWidth="2"
                        strokeDasharray="9 3"
                    />
                </CopyOutline>
            )}
            {name === "J10" && (
                <>
                    <Selection />
                    <Pointer width="22" height="24">
                        <path
                            d="M8 2h7v6h6v8h-6v6H8v-6H2V8h6z"
                            fill="#fff"
                            stroke="#000"
                            strokeWidth="2.500"
                            strokeLinejoin="round"
                        />
                    </Pointer>
                </>
            )}
            {name === "J13" && (
                <PasteOptions>
                    <PasteIcon size={23} />
                    (Ctrl)
                    <Caret />
                </PasteOptions>
            )}
        </Cell>
    );
}

function Grid() {
    return (
        <Sheet>
            <colgroup>
                <RowHeadCol />
                {columns.map((col) => (
                    <col key={col} />
                ))}
                <EdgeCol />
            </colgroup>
            <thead>
                <tr>
                    <Corner>
                        <svg width="16" height="16" fill="#b4b4b4">
                            <path d="M16 0v16H0z" />
                        </svg>
                    </Corner>
                    {columns.map((col) => (
                        <ColHead key={col} scope="col" $selected={col === "J"}>
                            {col}
                        </ColHead>
                    ))}
                    <ColHead />
                </tr>
            </thead>
            <tbody>
                {rowNumbers.map((row) => (
                    <tr key={row}>
                        <RowHead scope="row" $selected={row === 10}>
                            {row}
                        </RowHead>
                        {columns.map((col) => (
                            <SheetCell key={col} name={col + row} />
                        ))}
                        <Cell />
                    </tr>
                ))}
            </tbody>
        </Sheet>
    );
}

function Logo() {
    return (
        <Watermark width="300" height="80" fontFamily={uiFont} fontStyle="italic" fontWeight="500">
            <filter id="outline" x="-10%" y="-20%" width="120%" height="140%" colorInterpolationFilters="sRGB">
                <feMorphology in="SourceAlpha" operator="dilate" radius="4" />
                <feGaussianBlur stdDeviation="1.500" />
                <feComponentTransfer result="edge">
                    <feFuncR type="linear" slope="0" intercept="0.160" />
                    <feFuncG type="linear" slope="0" intercept="0.160" />
                    <feFuncB type="linear" slope="0" intercept="0.160" />
                    <feFuncA type="linear" slope="5" intercept="-1" />
                </feComponentTransfer>
                <feMerge>
                    <feMergeNode in="edge" />
                    <feMergeNode in="SourceGraphic" />
                </feMerge>
            </filter>
            <g filter="url(#outline)" fill="#fff" stroke="#fff" strokeLinejoin="round">
                <g strokeWidth="2">
                    <text x="9" y="53" fontSize="51">
                        秒
                    </text>
                    <text x="67" y="56" fontSize="52">
                        d
                    </text>
                    <text x="127" y="56" fontSize="52">
                        n
                    </text>
                    <text x="155" y="56" fontSize="52">
                        g
                    </text>
                    <text x="184" y="53" fontSize="51">
                        视频
                    </text>
                </g>
                <circle cx="113" cy="41" r="14" fill="#2f7be8" stroke="none" />
                <path d="M113 13l4 6 7-6" fill="none" stroke="#ffe600" strokeWidth="4" />
            </g>
            <path d="M108 33l13 8-13 8z" fill="#fff" />
        </Watermark>
    );
}

function App() {
    return (
        <Window>
            <GlobalStyle />
            <TitleBar>
                <QuickAccess>
                    <QuickButton aria-label="保存">
                        <SaveIcon />
                    </QuickButton>
                    <QuickButton aria-label="恢复" $dim>
                        <UndoIcon flip />
                        <Caret $color="#fff" />
                    </QuickButton>
                    <QuickButton aria-label="撤消">
                        <UndoIcon />
                        <Caret $color="#fff" />
                    </QuickButton>
                    <QuickButton aria-label="自定义快速访问工具栏">
                        <CustomizeIcon />
                    </QuickButton>
                </QuickAccess>
                <Title>工作簿2.xlsx   -   Excel</Title>
                <WindowButtons>
                    <LoginButton>登录</LoginButton>
                    <WindowButton aria-label="功能区显示选项">
                        <RibbonDisplayIcon />
                    </WindowButton>
                    <WindowButton aria-label="最小化">
                        <MinimizeIcon />
                    </WindowButton>
                    <WindowButton aria-label="还原">
                        <RestoreIcon />
                    </WindowButton>
                    <WindowButton aria-label="关闭">
                        <CloseIcon />
                    </WindowButton>
                </WindowButtons>
            </TitleBar>

            <TabBar>
                <Tab $file>文件</Tab>
                {tabs.map((tab) => (
                    <Tab key={tab} $active={tab === "开始"}>
                        {tab}
                    </Tab>
                ))}
                <TellMe>
                    <BulbIcon />
                    告诉我你想要做什么
                </TellMe>
                <Share>
                    <ShareIcon />
                    共享
                </Share>
            </TabBar>

            <RibbonBar />

            <FormulaBar>
                <NameBox>
                    <input aria-label="名称框" defaultValue="J10" />
                    <Caret $color="#777" />
                </NameBox>
                <Grip />
                <FxBox>
                    <FxButton aria-label="取消">
                        <svg width="16" height="16" stroke="#b8b8b8" strokeWidth="2.500">
                            <path d="M1 1l14 14M15 1L1 15" />
                        </svg>
                    </FxButton>
                    <FxButton aria-label="输入">
                        <svg width="20" height="16" fill="none" stroke="#b8b8b8" strokeWidth="3.500">
                            <path d="M2 8l5 6L18 1" />
                        </svg>
                    </FxButton>
                    <FxButton>
                        f<small>x</small>
                    </FxButton>
                </FxBox>
                <FormulaField>
                    <input aria-label="编辑栏" />
                    <button aria-label="展开编辑栏">
                        <Chevron down />
                    </button>
                </FormulaField>
            </FormulaBar>

            <SheetArea>
                <GridPane>
                    <Grid />
                </GridPane>
                <VScroll>
                    <ScrollButton aria-label="向上滚动">
                        <Arrow dir="up" />
                    </ScrollButton>
                    <VTrack>
                        <VThumb />
                    </VTrack>
                    <ScrollButton aria-label="向下滚动">
                        <Arrow dir="down" />
                    </ScrollButton>
                </VScroll>
            </SheetArea>

            <SheetBar>
                <SheetNav>
                    <Arrow dir="left" color="#b8b8b8" />
                    <Arrow dir="right" color="#b8b8b8" />
                </SheetNav>
                <SheetTab>Sheet1</SheetTab>
                <AddSheet aria-label="新工作表">
                    <svg width="24" height="24" fill="none" stroke="#777">
                        <circle cx="12" cy="12" r="10.500" strokeWidth="1.700" />
                        <path d="M12 6v12M6 12h12" strokeWidth="2.500" />
                    </svg>
                </AddSheet>
                <HScroll>
                    <Grip $tight />
                    <ScrollButton $horizontal aria-label="向左滚动">
                        <Arrow dir="left" />
                    </ScrollButton>
                    <HTrack>
                        <HThumb />
                    </HTrack>
                    <ScrollButton $horizontal aria-label="向右滚动">
                        <Arrow dir="right" />
                    </ScrollButton>
                </HScroll>
            </SheetBar>

            <StatusBar>
                <StatusText>选定目标区域，然后按 ENTER 或选择“粘贴”</StatusText>
                <ViewButton aria-label="普通" $on>
                    <ViewIcon kind="normal" />
                </ViewButton>
                <ViewButton aria-label="页面布局">
                    <ViewIcon kind="layout" />
                </ViewButton>
                <ViewButton aria-label="分页预览">
                    <ViewIcon kind="breaks" />
                </ViewButton>
                <ZoomButton aria-label="缩小">-</ZoomButton>
                <ZoomSlider type="range" aria-label="显示比例" min="0" max="200" defaultValue="104" />
                <ZoomButton aria-label="放大">+</ZoomButton>
                <ZoomValue>100%</ZoomValue>
            </StatusBar>

            <Logo />
        </Window>
    );
}

export default App;
